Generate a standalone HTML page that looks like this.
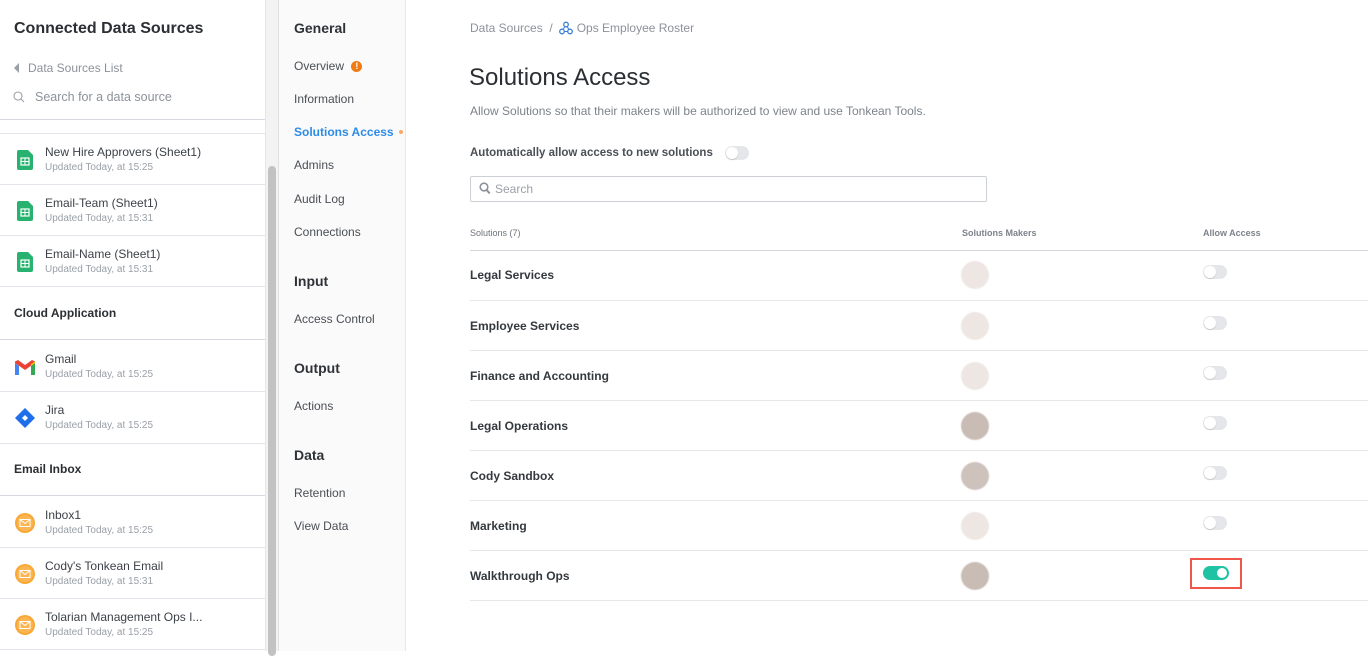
<!DOCTYPE html>
<html><head><meta charset="utf-8"><style>
*{box-sizing:border-box;margin:0;padding:0}
body{width:1368px;height:651px;overflow:hidden;font-family:"Liberation Sans",Arial,sans-serif;background:#fff;position:relative;color:#34393e}
.abs{position:absolute}
.left{left:0;top:0;width:265px;height:651px;background:#fff}
.sb{left:265px;top:0;width:14px;height:651px;background:#f3f3f3;border-left:1px solid #e6e6e6;border-right:1px solid #e0e0e0}
.thumb{left:268px;top:166px;width:8px;height:490px;background:#c2c2c2;border-radius:4px}
.nav{left:279px;top:0;width:127px;height:651px;background:#fafafa;border-right:1px solid #e8e8e8}
.nav div{position:absolute;left:15px;font-size:12px;color:#4a4f55}
.nav .h{font-size:14px;font-weight:bold;color:#2f3338}
.row{position:absolute;left:0;width:265px;border-top:1px solid #e3e5ea}
.row .t{position:absolute;left:45px;top:11px;font-size:12px;color:#3d4248}
.row .s{position:absolute;left:45px;top:28px;font-size:10px;color:#9aa0a8}
.row .ic{position:absolute;left:15px;top:16px}
.sec{position:absolute;left:14px;font-size:12px;font-weight:bold;color:#2b2f33}
.tr{position:absolute;left:470px;width:898px;height:50px;border-top:1px solid #e6e7ea}
.tr .n{position:absolute;left:0;top:18px;font-size:12px;font-weight:bold;color:#34393e}
.tr .av{position:absolute;left:491px;top:11px;width:28px;height:28px;border-radius:50%;background:#eee6e3;filter:blur(.5px)}
.tr .tg{position:absolute;left:733px;top:15px;width:24px;height:14px;border-radius:7px;background:#e4e6ea}
.tr .tg:after{content:"";position:absolute;left:1px;top:1px;width:12px;height:12px;border-radius:50%;background:#fff;box-shadow:0 1px 1px rgba(0,0,0,.15)}
</style></head><body>
<div class="abs left">
 <div class="abs" style="left:14px;top:20px;font-size:16px;font-weight:bold;color:#2b2f33">Connected Data Sources</div>
 <div class="abs" style="left:14px;top:61px;font-size:12px;color:#8c929a"><span style="display:inline-block;width:0;height:0;border-top:5px solid transparent;border-bottom:5px solid transparent;border-right:5px solid #9aa0a8;margin-right:9px;vertical-align:-1px"></span>Data Sources List</div>
 <svg class="abs" style="left:13px;top:91px" width="12" height="12" viewBox="0 0 12 12"><circle cx="5" cy="5" r="4" fill="none" stroke="#9aa0a8" stroke-width="1.1"/><path d="M8 8l3 3" stroke="#9aa0a8" stroke-width="1.1"/></svg>
 <div class="abs" style="left:35px;top:90px;font-size:12.5px;color:#8c929a">Search for a data source</div>
 <div class="abs" style="left:0;top:119px;width:265px;height:14px;background:#fff;border-top:1px solid #d5d8de"></div>

 <div class="row" style="top:133px;height:51px"><svg class="ic" width="17" height="20" viewBox="0 0 17 20" style="left:17px"><path d="M2 0h9l5 5v13a2 2 0 0 1-2 2H2a2 2 0 0 1-2-2V2a2 2 0 0 1 2-2z" fill="#27b36f"/><rect x="4" y="8" width="8" height="7" fill="none" stroke="#fff" stroke-width="1.2"/><path d="M4 11.5h8M8 8v7" stroke="#fff" stroke-width="1"/></svg><div class="t">New Hire Approvers (Sheet1)</div><div class="s">Updated Today, at 15:25</div></div>
 <div class="row" style="top:184px;height:51px"><svg class="ic" width="17" height="20" viewBox="0 0 17 20" style="left:17px"><path d="M2 0h9l5 5v13a2 2 0 0 1-2 2H2a2 2 0 0 1-2-2V2a2 2 0 0 1 2-2z" fill="#27b36f"/><rect x="4" y="8" width="8" height="7" fill="none" stroke="#fff" stroke-width="1.2"/><path d="M4 11.5h8M8 8v7" stroke="#fff" stroke-width="1"/></svg><div class="t">Email-Team (Sheet1)</div><div class="s">Updated Today, at 15:31</div></div>
 <div class="row" style="top:235px;height:51px"><svg class="ic" width="17" height="20" viewBox="0 0 17 20" style="left:17px"><path d="M2 0h9l5 5v13a2 2 0 0 1-2 2H2a2 2 0 0 1-2-2V2a2 2 0 0 1 2-2z" fill="#27b36f"/><rect x="4" y="8" width="8" height="7" fill="none" stroke="#fff" stroke-width="1.2"/><path d="M4 11.5h8M8 8v7" stroke="#fff" stroke-width="1"/></svg><div class="t">Email-Name (Sheet1)</div><div class="s">Updated Today, at 15:31</div></div>
 <div class="row" style="top:286px;height:54px;border-bottom:1px solid #d5d8de"></div>
 <div class="sec" style="top:306px">Cloud Application</div>
 <div class="row" style="top:341px;height:50px;border-top:none"><svg class="ic" width="20" height="16" viewBox="0 0 20 16" style="left:15px;top:19px"><path d="M0 3v12h4V6z" fill="#4285f4"/><path d="M16 6v9h4V3z" fill="#34a853"/><path d="M0 3l10 7 10-7V1.5L17 0 10 5 3 0 0 1.5z" fill="#ea4335"/><path d="M16 6l4-3V1.5L16 4z" fill="#fbbc04"/></svg><div class="t">Gmail</div><div class="s">Updated Today, at 15:25</div></div>
 <div class="row" style="top:391px;height:52px"><svg class="ic" width="20" height="20" viewBox="0 0 20 20" style="left:15px;top:16px"><path d="M10 0l10 10-10 10L0 10z" fill="#1f6feb"/><path d="M10 7l3 3-3 3-3-3z" fill="#fff"/></svg><div class="t">Jira</div><div class="s">Updated Today, at 15:25</div></div>
 <div class="row" style="top:443px;height:53px;border-bottom:1px solid #d5d8de"></div>
 <div class="sec" style="top:462px">Email Inbox</div>
 <div class="row" style="top:497px;height:50px;border-top:none"><svg class="ic" width="20" height="20" viewBox="0 0 20 20" style="left:15px;top:16px"><circle cx="10" cy="10" r="10" fill="#f8a836"/><circle cx="10" cy="10" r="8" fill="#fbb653"/><rect x="5" y="6.5" width="10" height="7" fill="none" stroke="#fff" stroke-width="1"/><path d="M5 6.5l5 4 5-4" fill="none" stroke="#fff" stroke-width="1"/></svg><div class="t">Inbox1</div><div class="s">Updated Today, at 15:25</div></div>
 <div class="row" style="top:547px;height:51px"><svg class="ic" width="20" height="20" viewBox="0 0 20 20" style="left:15px;top:16px"><circle cx="10" cy="10" r="10" fill="#f8a836"/><circle cx="10" cy="10" r="8" fill="#fbb653"/><rect x="5" y="6.5" width="10" height="7" fill="none" stroke="#fff" stroke-width="1"/><path d="M5 6.5l5 4 5-4" fill="none" stroke="#fff" stroke-width="1"/></svg><div class="t">Cody's Tonkean Email</div><div class="s">Updated Today, at 15:31</div></div>
 <div class="row" style="top:598px;height:52px;border-bottom:1px solid #e3e5ea"><svg class="ic" width="20" height="20" viewBox="0 0 20 20" style="left:15px;top:16px"><circle cx="10" cy="10" r="10" fill="#f8a836"/><circle cx="10" cy="10" r="8" fill="#fbb653"/><rect x="5" y="6.5" width="10" height="7" fill="none" stroke="#fff" stroke-width="1"/><path d="M5 6.5l5 4 5-4" fill="none" stroke="#fff" stroke-width="1"/></svg><div class="t">Tolarian Management Ops I...</div><div class="s">Updated Today, at 15:25</div></div>
</div>
<div class="abs sb"></div><div class="abs thumb"></div>
<div class="abs nav">
 <div class="h" style="top:20px">General</div>
 <div style="top:59px">Overview <span style="display:inline-block;width:11px;height:11px;border-radius:50%;background:#f07b14;color:#fff;font-size:9px;font-weight:bold;text-align:center;line-height:11px;margin-left:4px;vertical-align:1px">!</span></div>
 <div style="top:92px">Information</div>
 <div style="top:125px;color:#2d8ce6;font-weight:bold;white-space:nowrap">Solutions Access <span style="display:inline-block;width:4px;height:4px;border-radius:50%;background:#f8a86a;margin-left:2px;vertical-align:2px"></span></div>
 <div style="top:158px">Admins</div>
 <div style="top:192px">Audit Log</div>
 <div style="top:225px">Connections</div>
 <div class="h" style="top:273px">Input</div>
 <div style="top:312px">Access Control</div>
 <div class="h" style="top:360px">Output</div>
 <div style="top:399px">Actions</div>
 <div class="h" style="top:447px">Data</div>
 <div style="top:486px">Retention</div>
 <div style="top:519px">View Data</div>
</div>
<div class="abs" style="left:470px;top:21px;font-size:12px;color:#8c929a">Data Sources&nbsp; /&nbsp; <svg width="14" height="14" viewBox="0 0 14 14" style="vertical-align:-3px"><circle cx="7" cy="3.5" r="2.3" fill="none" stroke="#3b82d6" stroke-width="1.3"/><circle cx="3" cy="10.5" r="2.3" fill="none" stroke="#3b82d6" stroke-width="1.3"/><circle cx="11" cy="10.5" r="2.3" fill="none" stroke="#3b82d6" stroke-width="1.3"/><path d="M6 5.5L4 8.5M8 5.5l2 3M5.3 10.5h3.4" stroke="#3b82d6" stroke-width="1.1"/></svg> Ops Employee Roster</div>
<div class="abs" style="left:469px;top:64px;font-size:24px;color:#2b2f33">Solutions Access</div>
<div class="abs" style="left:470px;top:104px;font-size:12px;color:#7d838b">Allow Solutions so that their makers will be authorized to view and use Tonkean Tools.</div>
<div class="abs" style="left:470px;top:147px;font-size:11.5px;font-weight:bold;color:#4a4f55">Automatically allow access to new solutions</div>
<div class="abs" style="left:725px;top:146px;width:24px;height:14px;border-radius:7px;background:#e4e6ea"><div style="position:absolute;left:1px;top:1px;width:12px;height:12px;border-radius:50%;background:#fff;box-shadow:0 1px 1px rgba(0,0,0,.15)"></div></div>
<div class="abs" style="left:470px;top:176px;width:517px;height:26px;border:1px solid #ccd0d5;border-radius:2px"></div>
<svg class="abs" style="left:479px;top:182px" width="12" height="13" viewBox="0 0 12 13"><circle cx="5" cy="5" r="3.8" fill="none" stroke="#8c929a" stroke-width="1.6"/><path d="M7.7 8l3 3.5" stroke="#8c929a" stroke-width="2"/></svg>
<div class="abs" style="left:495px;top:182px;font-size:12px;color:#9aa0a8">Search</div>
<div class="abs" style="left:470px;top:228px;font-size:9px;color:#6d737b">Solutions (7)</div>
<div class="abs" style="left:962px;top:228px;font-size:9px;font-weight:bold;color:#7d838b">Solutions Makers</div>
<div class="abs" style="left:1203px;top:228px;font-size:9px;font-weight:bold;color:#7d838b">Allow Access</div>
<div class="abs" style="left:470px;top:250px;width:898px;border-top:1px solid #d5d8de"></div>
<div class="tr" style="top:250px;border-top:none"><div class="n">Legal Services</div><div class="av"></div><div class="tg"></div></div>
<div class="tr" style="top:300px"><div class="n">Employee Services</div><div class="av"></div><div class="tg"></div></div>
<div class="tr" style="top:350px"><div class="n">Finance and Accounting</div><div class="av"></div><div class="tg"></div></div>
<div class="tr" style="top:400px"><div class="n">Legal Operations</div><div class="av" style="background:#c9bcb5"></div><div class="tg"></div></div>
<div class="tr" style="top:450px"><div class="n">Cody Sandbox</div><div class="av" style="background:#cdc2bc"></div><div class="tg"></div></div>
<div class="tr" style="top:500px"><div class="n">Marketing</div><div class="av"></div><div class="tg"></div></div>
<div class="tr" style="top:550px;border-bottom:1px solid #e6e7ea;height:51px"><div class="n">Walkthrough Ops</div><div class="av" style="background:#c8bcb4"></div></div>
<div class="abs" style="left:1190px;top:558px;width:52px;height:31px;border:2px solid #f0574a"></div>
<div class="abs" style="left:1203px;top:566px;width:26px;height:14px;border-radius:7px;background:#1ec3a3"><div style="position:absolute;right:2px;top:2px;width:10px;height:10px;border-radius:50%;background:#fff"></div></div>
</body></html>
